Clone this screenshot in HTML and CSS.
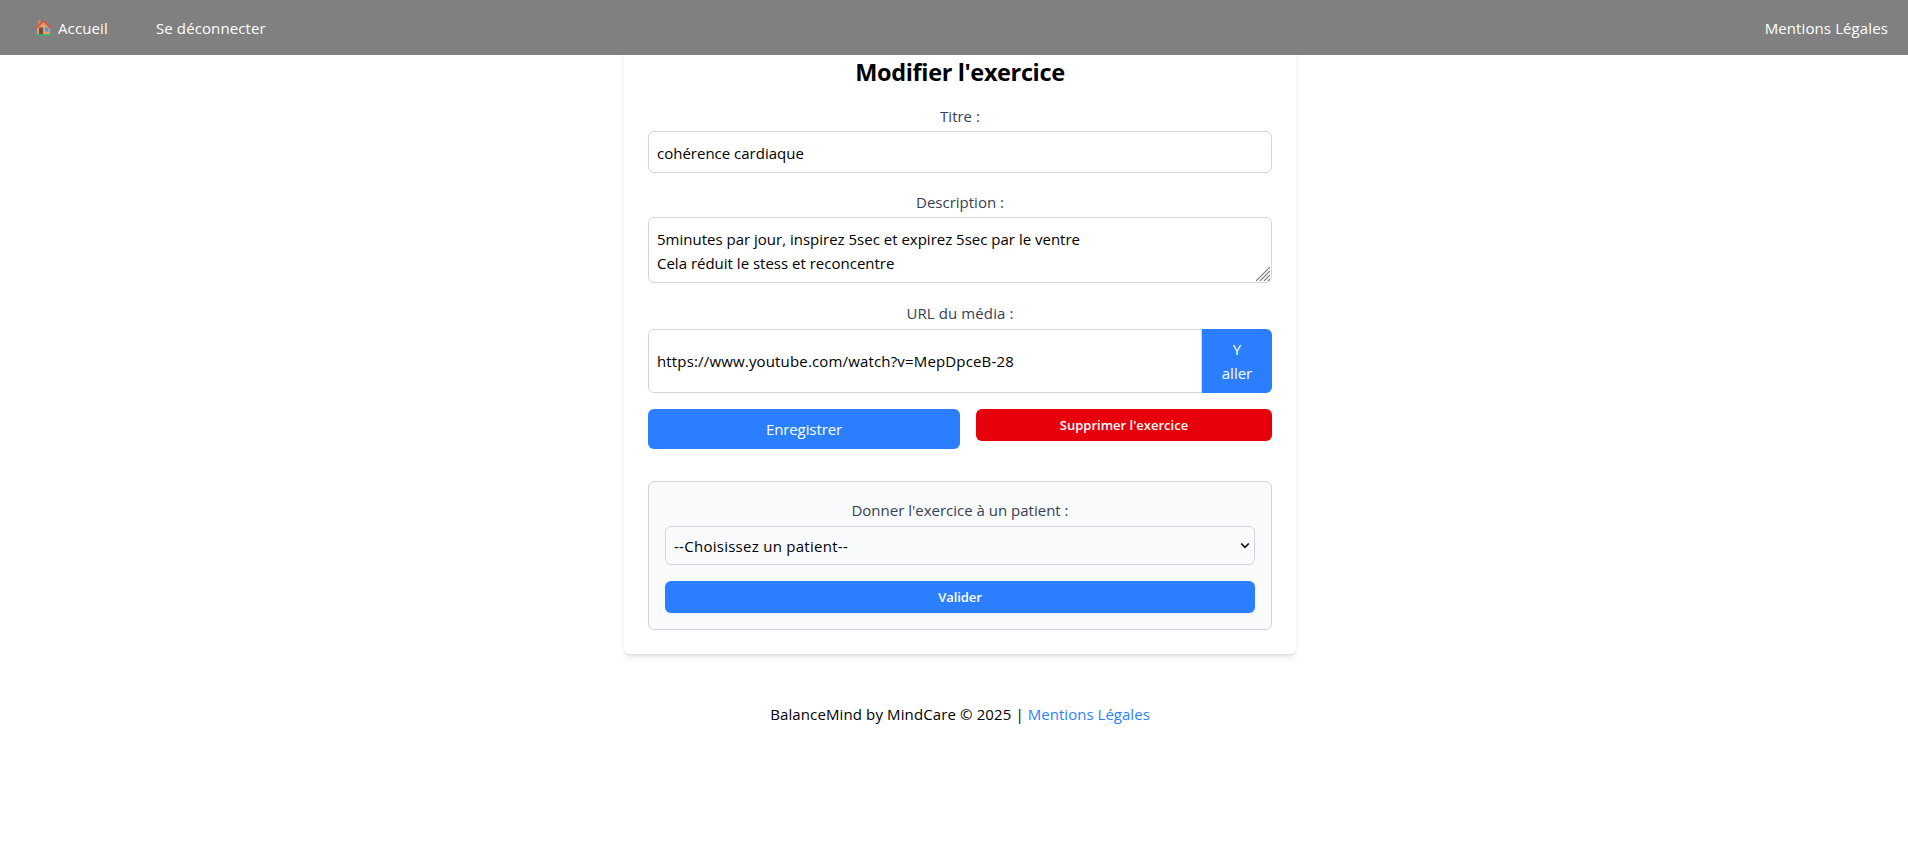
FILE: index.html
```html
<!DOCTYPE html>
<html lang="fr">
<head>
<meta charset="utf-8">
<title>Modifier l'exercice</title>
<link rel="stylesheet" href="styles.css">
</head>
<body>
<nav class="navbar">
  <a class="nav-link home" href="#">
    <svg class="house" viewBox="0 0 17 16" aria-hidden="true">
      <rect x="3" y="0.5" width="2.4" height="5" fill="#c98a5e"/>
      <path d="M2 8 8.5 2.2 15 8v6.5H2z" fill="#dda070"/>
      <path d="M0.8 8.4 8.5 1.2 16.2 8.4" fill="none" stroke="#e8503a" stroke-width="1.5"/>
      <rect x="4" y="7.5" width="4" height="7" fill="#7a4a48"/>
      <rect x="10" y="7.5" width="3.6" height="4" fill="#3aa0ee"/>
      <rect x="0" y="14.3" width="17" height="1.4" fill="#35b56a"/>
    </svg>
    <span>Accueil</span>
  </a>
  <a class="nav-link" href="#">Se déconnecter</a>
  <a class="nav-link legal" href="#">Mentions Légales</a>
</nav>
<div class="page">
<main class="card">
  <h2 class="title">Modifier l'exercice</h2>
  <form>
    <label class="label" for="titre">Titre :</label>
    <input class="field field-title" id="titre" value="cohérence cardiaque">
    <label class="label" for="desc">Description :</label>
    <div class="desc-wrap">
      <textarea class="field field-desc" id="desc" rows="2" spellcheck="false">5minutes par jour, inspirez 5sec et expirez 5sec par le ventre
Cela réduit le stess et reconcentre</textarea>
      <svg class="grip" viewBox="0 0 14 14" aria-hidden="true"><path d="M0 14 14 0M4 14 14 4M8 14l6-6M12 14l2-2"/></svg>
    </div>
    <label class="label label-url" for="url">URL du média :</label>
    <div class="url-row">
      <input class="field field-url" id="url" value="https://www.youtube.com/watch?v=MepDpceB-28">
      <a class="go" href="#">Y<br>aller</a>
    </div>
    <div class="actions">
      <button class="btn btn-save" type="button">Enregistrer</button>
      <button class="btn btn-small btn-delete" type="button">Supprimer l'exercice</button>
    </div>
  </form>
  <section class="assign">
    <label class="label label-assign" for="patient">Donner l'exercice à un patient :</label>
    <div class="select-wrap">
      <select class="field field-select" id="patient"><option>--Choisissez un patient--</option></select>
      <svg class="chevron" viewBox="0 0 10 7" aria-hidden="true"><path d="M1.2 1.5 5 5.3 8.8 1.5"/></svg>
    </div>
    <button class="btn btn-small btn-validate" type="button">Valider</button>
  </section>
</main>
<footer class="footer"><span class="copyright">BalanceMind by MindCare © 2025 |</span> <a href="#">Mentions Légales</a></footer>
</div>
</body>
</html>
```
FILE: styles.css
```css
* { box-sizing: border-box; }
body { margin: 0; background: #fff; color: #000; font: 15px/24px "Open Sans", "Noto Sans", sans-serif; }
a { color: inherit; text-decoration: none; }
.navbar { position: relative; z-index: 1; display: flex; align-items: center; height: 55px; padding: 0 20px 0 35px; background: #808080; color: #fff; letter-spacing: .11px; }
.nav-link { white-space: nowrap; }
.home { display: flex; align-items: center; gap: 6px; width: 121px; }
.house { width: 17px; height: 16px; margin-top: 1px; }
.legal { margin-left: auto; }
.page { margin-top: -23px; padding-left: 12px; }
.card { width: 672px; height: 622px; margin: 0 auto; padding: 24px; background: #fff; border-radius: 6px; box-shadow: 0 4px 6px -1px rgba(0,0,0,.1), 0 2px 4px -2px rgba(0,0,0,.1); }
.title { margin: 0 0 16px; font-size: 23.5px; line-height: 32px; font-weight: 700; letter-spacing: -.37px; text-align: center; }
.label { display: block; height: 24px; margin-bottom: 3px; color: #364153; text-align: center; }
.label-url { letter-spacing: .1px; }
.field { display: block; width: 100%; margin: 0 0 17px; padding: 8px; border: 1px solid #d1d5dc; border-radius: 6px; background: transparent; color: #000; font: inherit; outline: 0; }
.field-title { height: 42px; padding: 9px 8px 7px; }
.desc-wrap { position: relative; margin-bottom: 18px; }
.field-desc { height: 66px; margin: 0; padding: 9px 8px 7px; overflow: hidden; resize: none; }
.grip { position: absolute; right: 2px; bottom: 2px; width: 14px; height: 14px; fill: none; stroke: #777; stroke-width: 1.1; }
.url-row { display: flex; height: 64px; margin: 4px 0 16px; }
.field-url { flex: 1; height: 64px; margin: 0; border-radius: 6px 0 0 6px; letter-spacing: .16px; }
.go { width: 70px; padding: 8px 0; border-radius: 0 6px 6px 0; background: #2b7fff; color: #fff; text-align: center; }
.actions { display: flex; align-items: flex-start; gap: 16px; height: 72px; }
.btn { display: block; border: 0; border-radius: 6px; padding: 0; background: #2b7fff; color: #fff; font: inherit; text-align: center; }
.btn-save { width: 312px; height: 40px; letter-spacing: -.1px; }
.btn-small { height: 32px; font-size: 13px; font-weight: 600; box-shadow: 0 1px 2px rgba(0,0,0,.05); }
.btn-delete { width: 296px; background: #e7000b; }
.assign { height: 149px; padding: 16px; border: 1px solid #d1d5dc; border-radius: 6px; background: #f9fafb; }
.label-assign { margin-bottom: 4px; }
.select-wrap { position: relative; margin-bottom: 16px; }
.field-select { height: 39px; margin: 0; padding: 0 8px; letter-spacing: .27px; appearance: none; }
.chevron { position: absolute; right: 5px; top: 16px; width: 10px; height: 7px; fill: none; stroke: #111; stroke-width: 1.7; pointer-events: none; }
.btn-validate { width: 100%; letter-spacing: -.08px; }
.footer { margin-top: 48px; text-align: center; letter-spacing: .03px; }
.copyright { letter-spacing: .12px; }
.footer a { color: #2b7fff; }
```
